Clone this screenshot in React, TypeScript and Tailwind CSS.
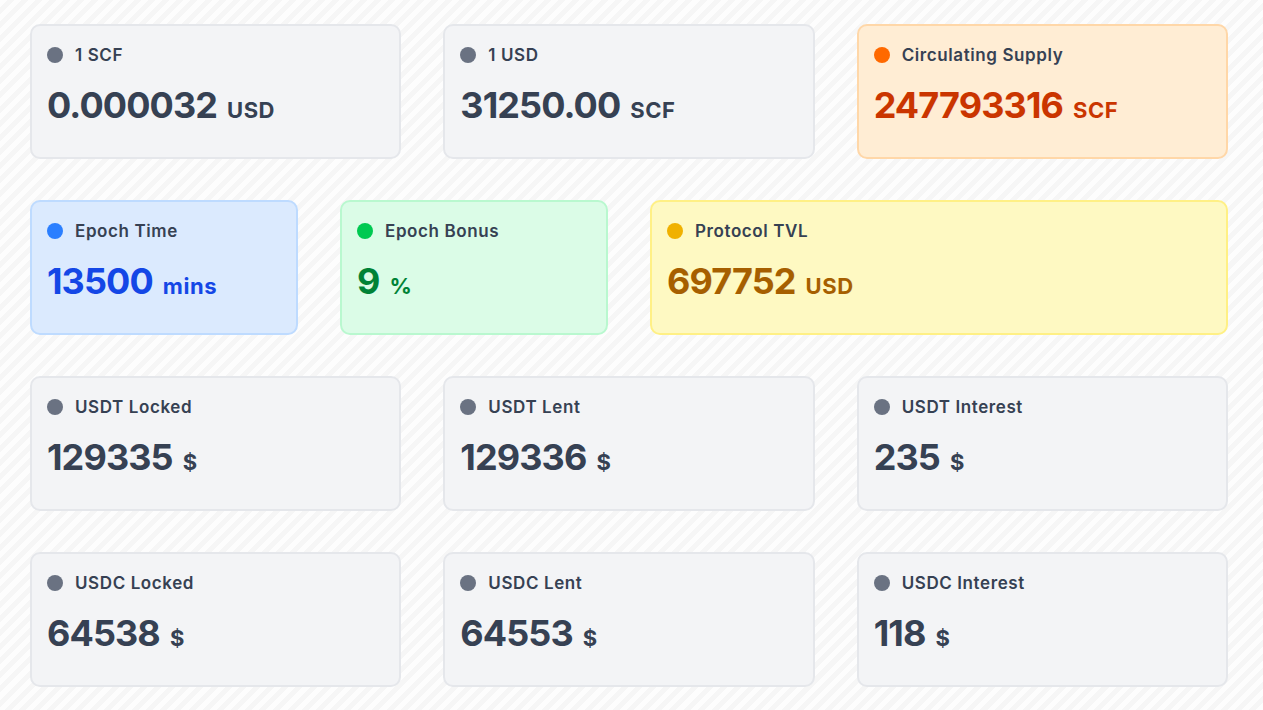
import React from "react";

type Tone = "gray" | "orange" | "blue" | "green" | "yellow";

const tones: Record<Tone, { card: string; dot: string; value: string }> = {
  gray: { card: "bg-gray-100 border-gray-200", dot: "bg-gray-500", value: "text-gray-700" },
  orange: { card: "bg-orange-100 border-orange-200", dot: "bg-orange-500", value: "text-orange-700" },
  blue: { card: "bg-blue-100 border-blue-200", dot: "bg-blue-500", value: "text-blue-700" },
  green: { card: "bg-green-100 border-green-200", dot: "bg-green-500", value: "text-green-700" },
  yellow: { card: "bg-yellow-100 border-yellow-200", dot: "bg-yellow-500", value: "text-yellow-700" },
};

function StatCard({
  label,
  value,
  unit,
  tone = "gray",
  className = "",
}: {
  label: string;
  value: string;
  unit: string;
  tone?: Tone;
  className?: string;
}) {
  const t = tones[tone];
  return (
    <div className={`h-[135px] rounded-[10px] border-2 px-[15px] pt-[17px] ${t.card} ${className}`}>
      <div className="flex items-center gap-3">
        <span className={`h-4 w-4 rounded-full ${t.dot}`} />
        <span className="text-[17px] font-semibold leading-6 tracking-[0.035em] text-gray-700">{label}</span>
      </div>
      <div className={`mt-[18px] flex items-baseline gap-[10px] font-bold ${t.value}`}>
        <span className="text-4xl leading-10 tracking-tight">{value}</span>
        <span className="text-[22px] tracking-wide">{unit}</span>
      </div>
    </div>
  );
}

export default function App() {
  return (
    <div
      className="min-h-[710px] w-full bg-[repeating-linear-gradient(135deg,#fdfdfd_0px,#fdfdfd_5px,#f6f6f6_5px,#f6f6f6_10px)] pl-[30px] pt-[24px] pb-6"
      style={{ fontFamily: "Inter, 'Noto Sans', sans-serif" }}
    >
      <div className="flex w-[1198px] flex-col gap-[41px]">
        <div className="grid grid-cols-3 gap-[42px]">
          <StatCard label="1 SCF" value="0.000032" unit="USD" />
          <StatCard label="1 USD" value="31250.00" unit="SCF" />
          <StatCard label="Circulating Supply" value="247793316" unit="SCF" tone="orange" />
        </div>
        <div className="grid grid-cols-4 gap-[42px]">
          <StatCard label="Epoch Time" value="13500" unit="mins" tone="blue" />
          <StatCard label="Epoch Bonus" value="9" unit="%" tone="green" />
          <StatCard label="Protocol TVL" value="697752" unit="USD" tone="yellow" className="col-span-2" />
        </div>
        <div className="grid grid-cols-3 gap-[42px]">
          <StatCard label="USDT Locked" value="129335" unit="$" />
          <StatCard label="USDT Lent" value="129336" unit="$" />
          <StatCard label="USDT Interest" value="235" unit="$" />
        </div>
        <div className="grid grid-cols-3 gap-[42px]">
          <StatCard label="USDC Locked" value="64538" unit="$" />
          <StatCard label="USDC Lent" value="64553" unit="$" />
          <StatCard label="USDC Interest" value="118" unit="$" />
        </div>
      </div>
    </div>
  );
}
